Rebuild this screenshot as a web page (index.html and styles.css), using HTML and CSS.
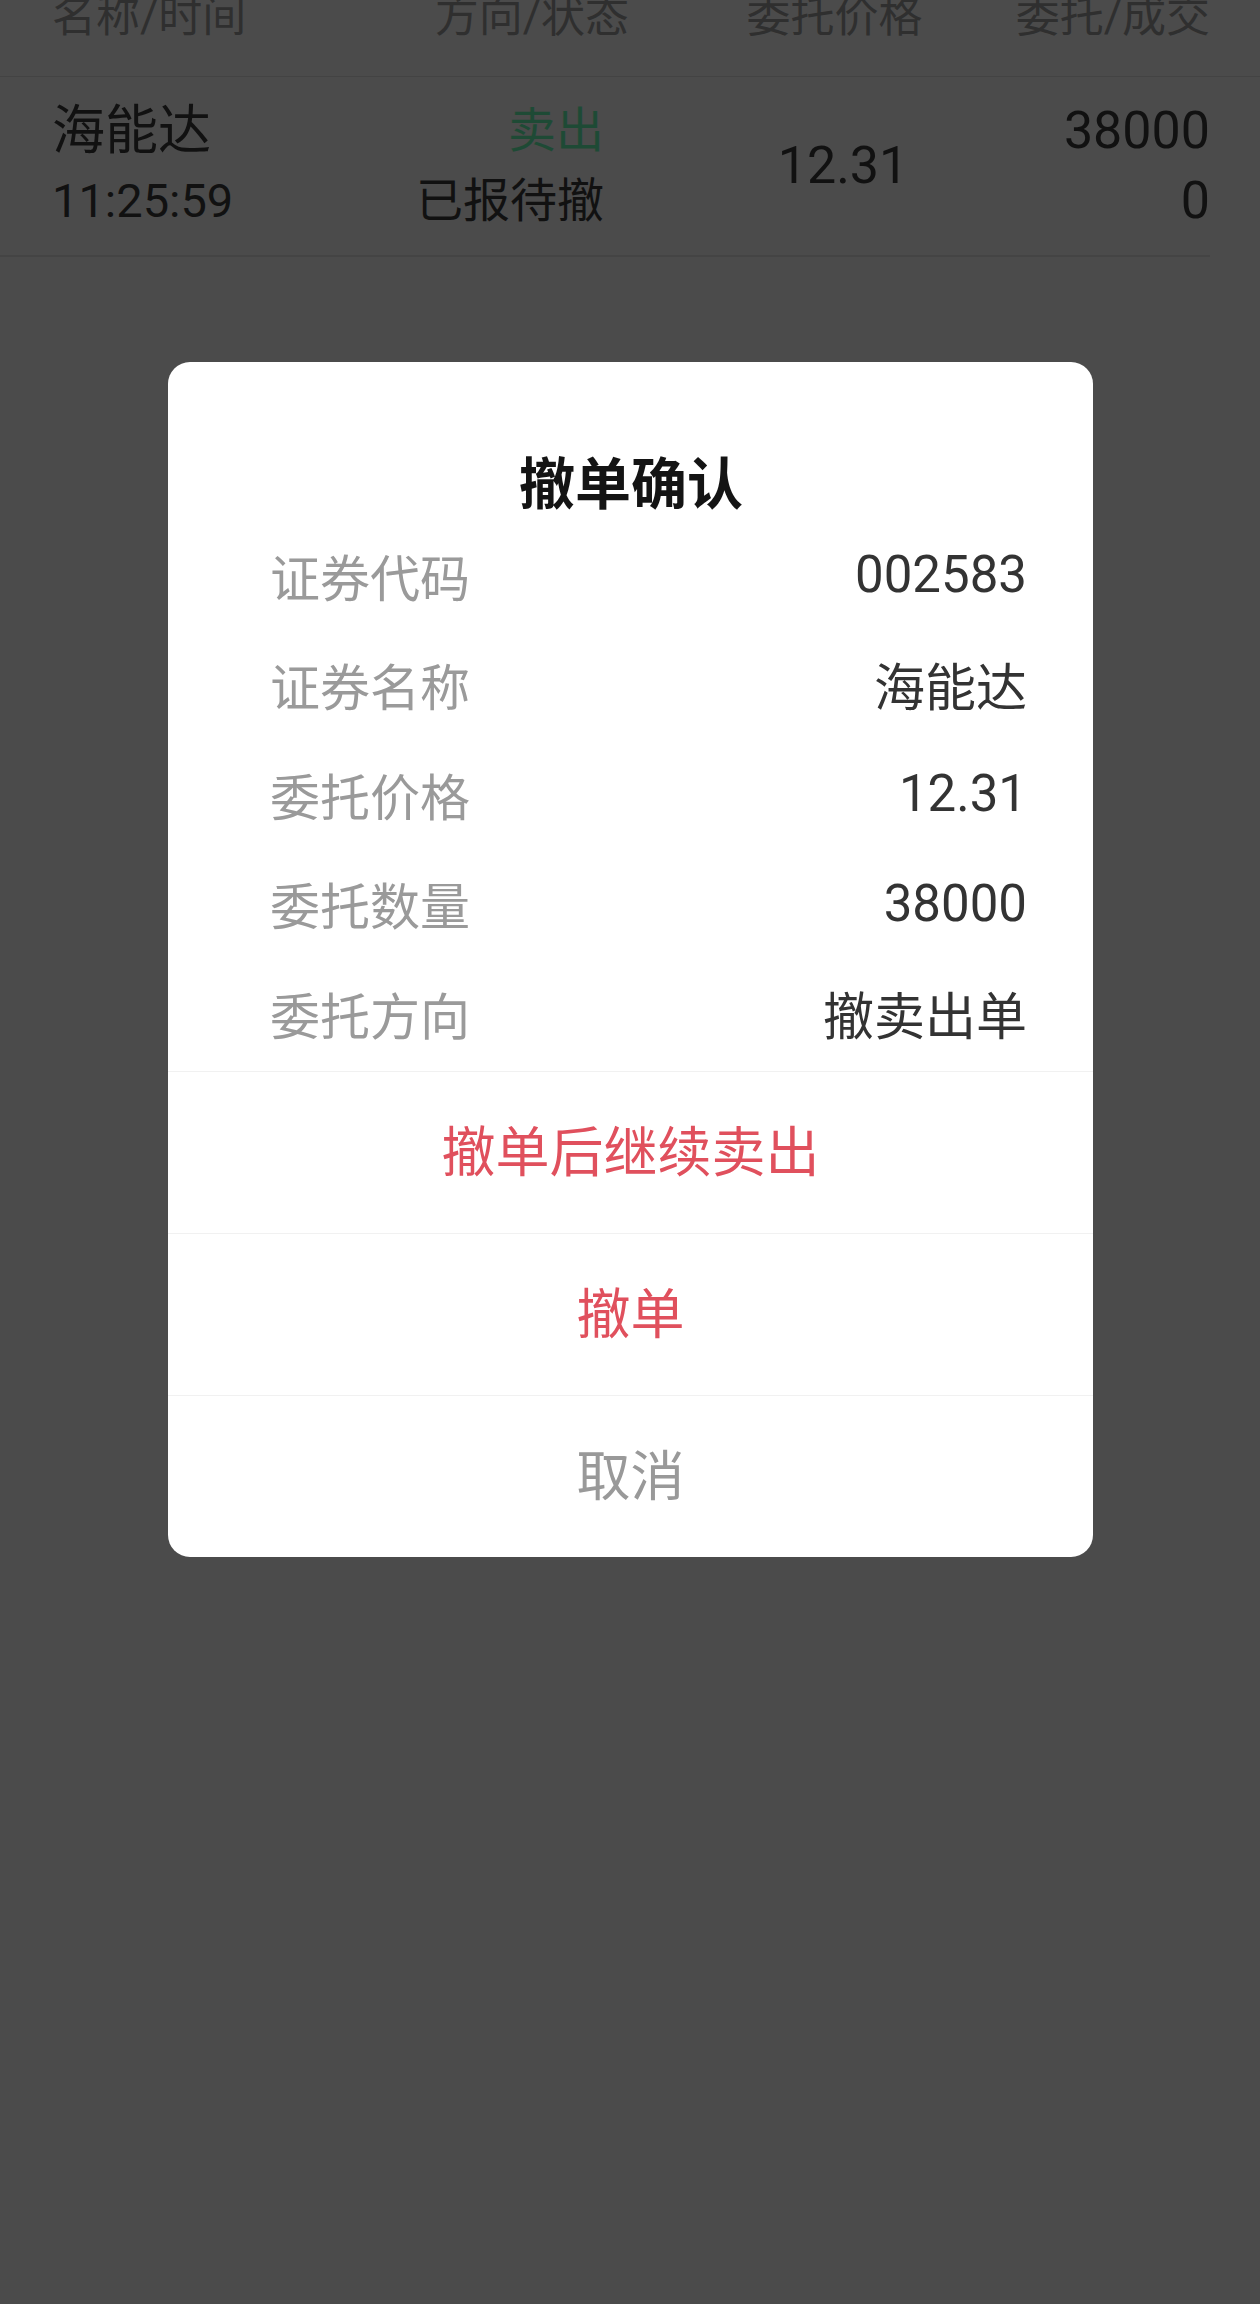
FILE: index.html
```html
<!DOCTYPE html>
<html lang="zh-CN">
<head>
<meta charset="utf-8">
<title>撤单确认</title>
<link rel="stylesheet" href="styles.css">
</head>
<body>
<div class="screen">
  <div class="list">
    <div class="list-head">
      <span class="c1">名称/时间</span>
      <span class="c2">方向/状态</span>
      <span class="c3">委托价格</span>
      <span class="c4">委托/成交</span>
    </div>
    <div class="list-row">
      <div class="cell c1">
        <span class="name">海能达</span>
        <span class="sub">11:25:59</span>
      </div>
      <div class="cell c2">
        <span class="dir">卖出</span>
        <span class="sub">已报待撤</span>
      </div>
      <div class="cell c3">
        <span class="num">12.31</span>
      </div>
      <div class="cell c4">
        <span class="num">38000</span>
        <span class="num">0</span>
      </div>
    </div>
  </div>

  <div class="overlay">
    <div class="dialog">
      <div class="dialog-body">
        <div class="dialog-title">撤单确认</div>
        <div class="info-row"><span class="label">证券代码</span><span class="value">002583</span></div>
        <div class="info-row"><span class="label">证券名称</span><span class="value">海能达</span></div>
        <div class="info-row"><span class="label">委托价格</span><span class="value">12.31</span></div>
        <div class="info-row"><span class="label">委托数量</span><span class="value">38000</span></div>
        <div class="info-row"><span class="label">委托方向</span><span class="value">撤卖出单</span></div>
      </div>
      <div class="dialog-btn btn-red">撤单后继续卖出</div>
      <div class="dialog-btn btn-red">撤单</div>
      <div class="dialog-btn btn-gray">取消</div>
    </div>
  </div>
</div>
</body>
</html>
```

FILE: styles.css
```css
html, body {
  margin: 0;
  padding: 0;
}
body {
  background: #4b4b4b;
  font-family: Roboto, "Noto Sans CJK SC", sans-serif;
}
.screen {
  position: relative;
  width: 1260px;
  height: 2304px;
  overflow: hidden;
  background: #4b4b4b;
}

/* underlying list */
.list-head,
.list-row {
  display: grid;
  padding-left: 52px;
}
.list-head {
  grid-template-columns: 248px 329px 411px 170px;
  height: 76px;
  border-bottom: 1px solid #434343;
  align-items: start;
  font-size: 44px;
  line-height: 34px;
  color: #2f2f2f;
  white-space: nowrap;
}
.c1 { justify-self: start; text-align: left; }
.c2 { justify-self: end; text-align: right; }
.c3 { justify-self: center; text-align: center; }
.c4 { justify-self: end; text-align: right; }

.list-row {
  grid-template-columns: 248px 304px 478px 128px;
  height: 178px;
  margin-right: 50px;
  border-bottom: 2px solid #444444;
  align-items: center;
  color: #111111;
}
.cell {
  display: flex;
  flex-direction: column;
  white-space: nowrap;
  line-height: 70px;
}
.cell.c2, .cell.c4 { align-items: flex-end; }
.cell.c3 { align-items: center; }
.name { font-size: 53px; }
.sub { font-size: 47px; }
.dir { font-size: 48px; color: #1e4a35; }
.num { font-size: 52px; }

/* modal */
.overlay {
  position: absolute;
  left: 0;
  top: 0;
  right: 0;
  bottom: 0;
  display: flex;
  justify-content: center;
  align-items: flex-start;
  padding-top: 362px;
  padding-left: 1px;
}
.dialog {
  width: 925px;
  background: #ffffff;
  border-radius: 22px;
  overflow: hidden;
}
.dialog-body {
  padding: 88px 66px 3.5px 102px;
}
.dialog-title {
  text-align: center;
  font-size: 56px;
  font-weight: bold;
  line-height: 70px;
  color: #141414;
  margin-left: -35px;
}
.info-row {
  display: flex;
  justify-content: space-between;
  align-items: center;
  height: 109.5px;
}
.label {
  font-size: 50px;
  color: #9a9a9a;
}
.value {
  font-size: 51px;
  color: #333333;
}
.dialog-btn {
  height: 162px;
  box-sizing: border-box;
  padding-bottom: 9px;
  border-top: 1px solid #f1f1f1;
  display: flex;
  align-items: center;
  justify-content: center;
  font-size: 54px;
}
.btn-red { color: #e0505d; }
.btn-gray { color: #999999; }
```
